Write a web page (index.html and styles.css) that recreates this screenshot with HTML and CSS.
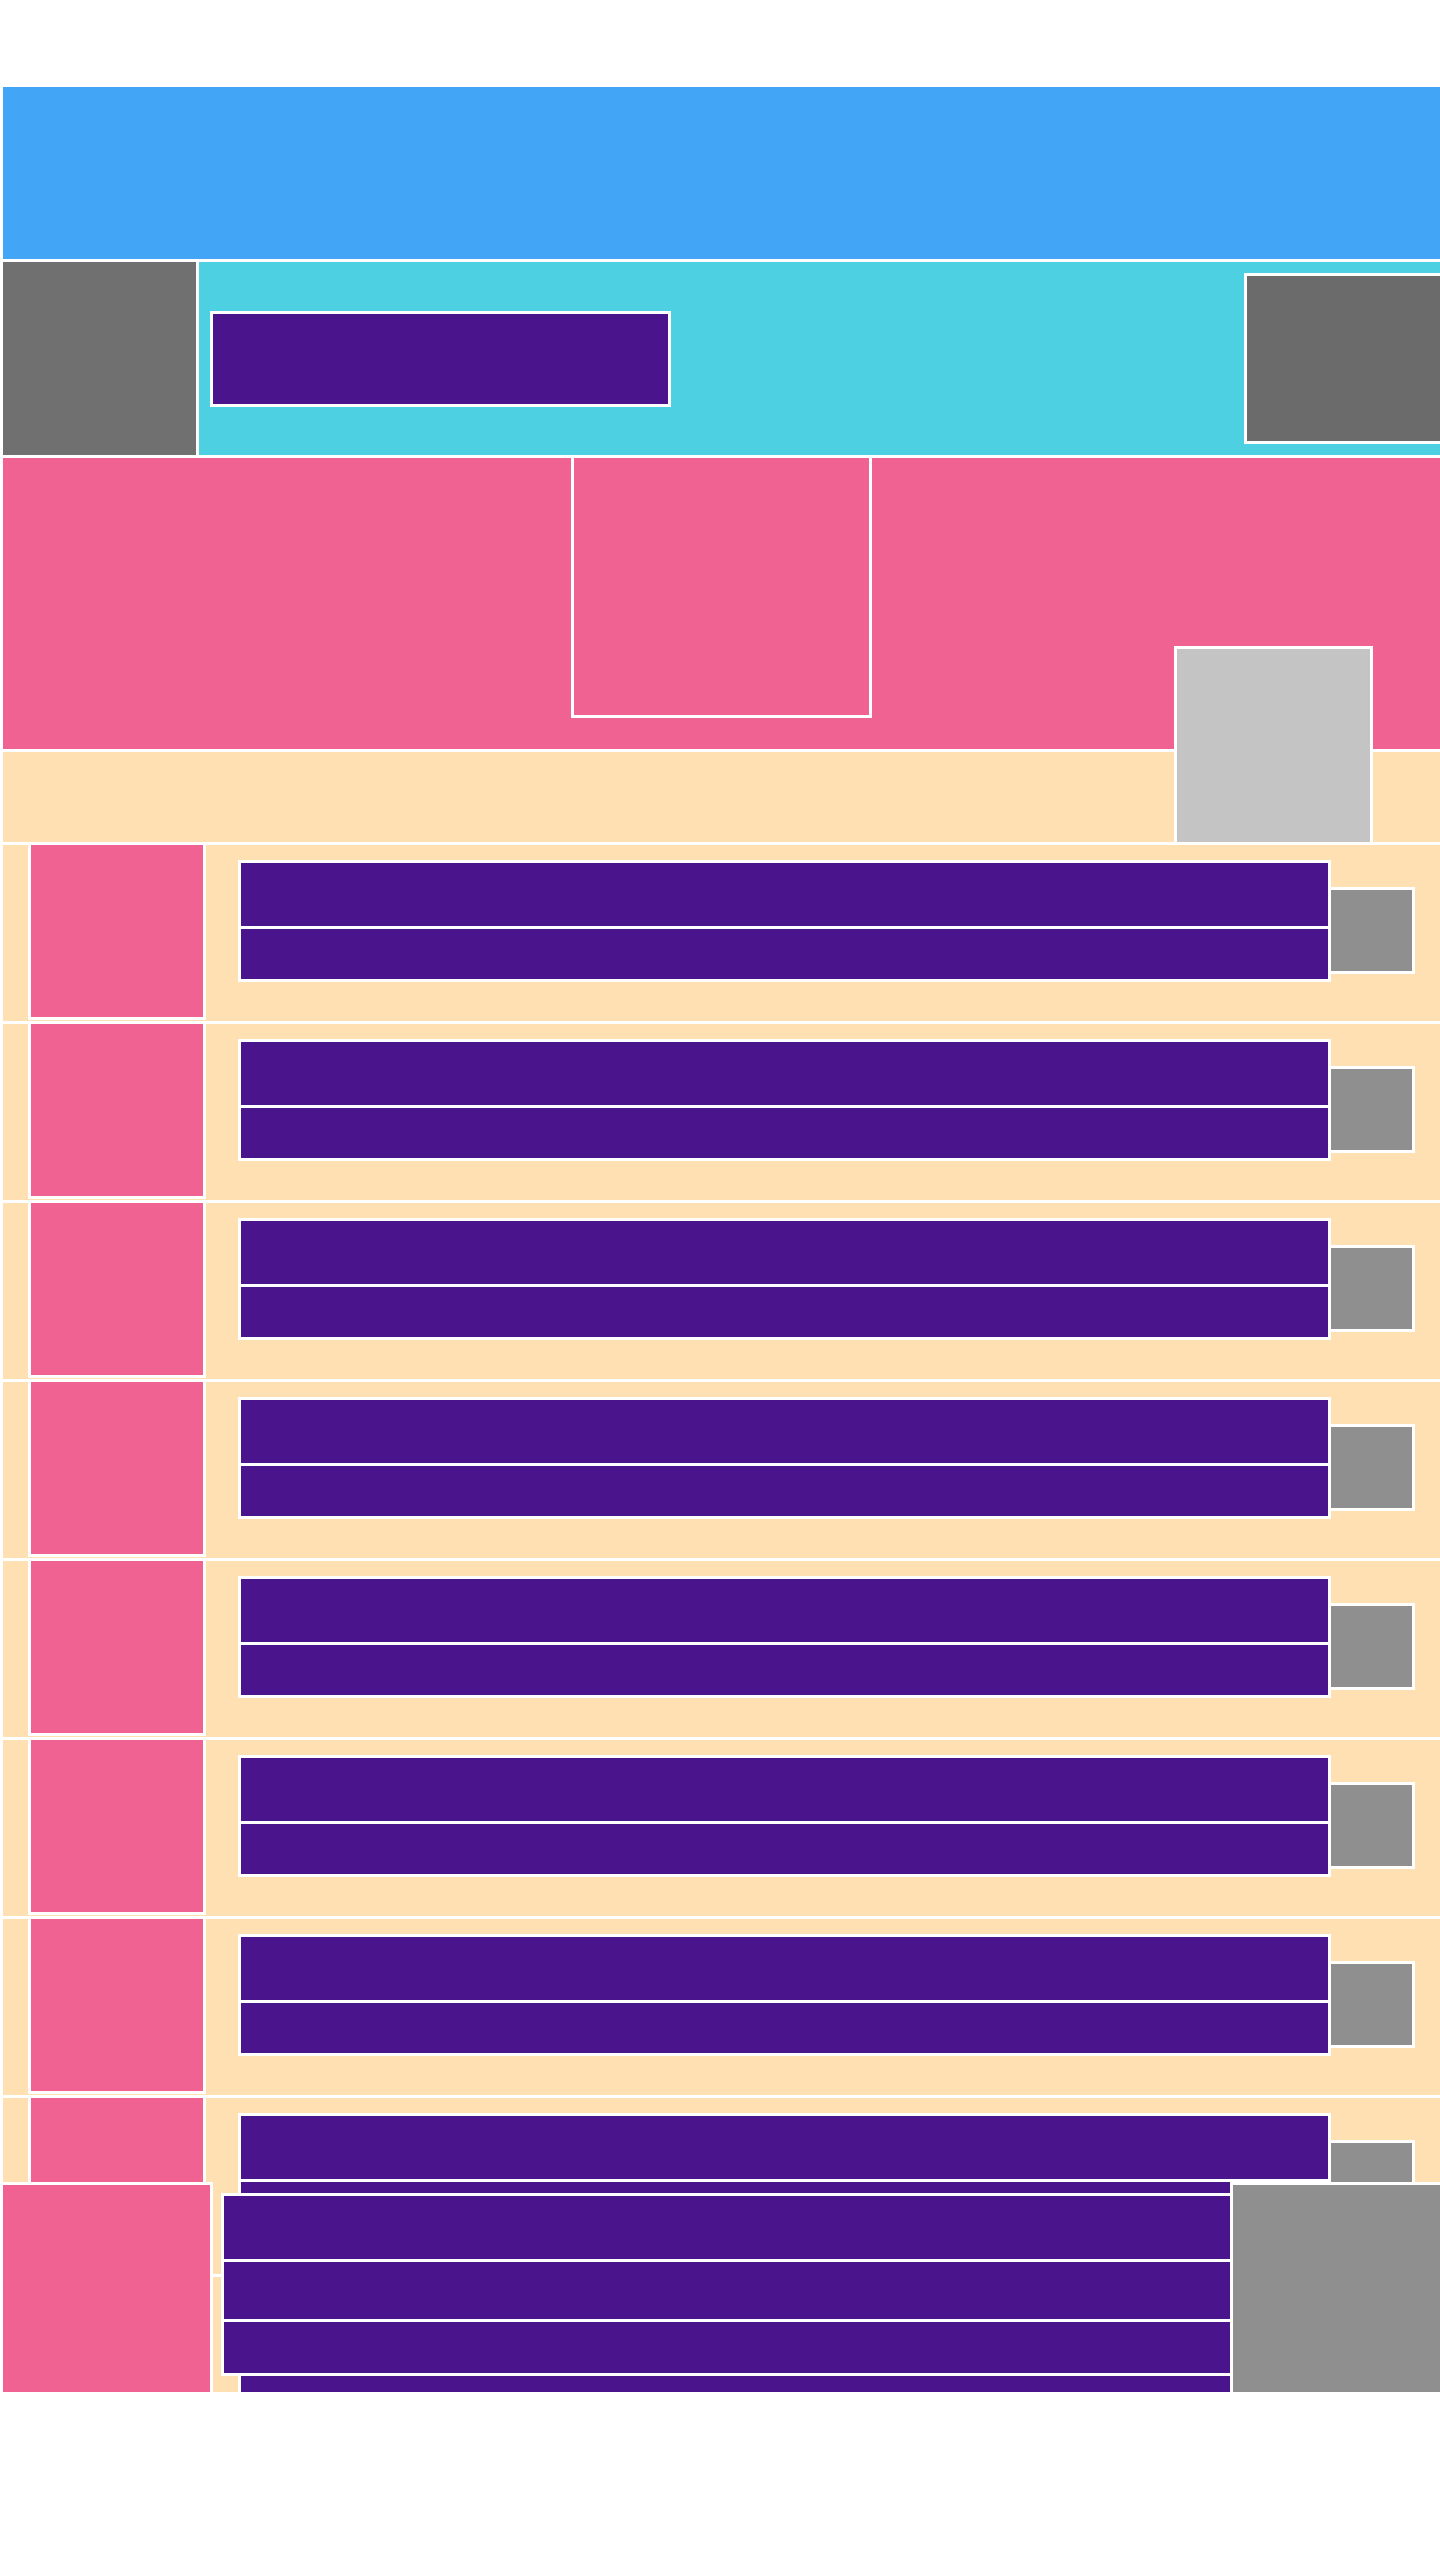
FILE: index.html
```html
<!DOCTYPE html>
<html lang="en">
<head>
<meta charset="utf-8">
<title>Layout</title>
<link rel="stylesheet" href="styles.css">
</head>
<body>
<div class="page">
  <div class="stack">
    <header class="topbar"></header>
    <div class="navrow">
      <div class="nav-logo"></div>
      <div class="nav-main">
        <div class="nav-search"></div>
        <div class="nav-side"></div>
      </div>
    </div>
    <section class="hero">
      <div class="hero-frame"></div>
      <div class="hero-avatar"></div>
    </section>
    <div class="band"></div>
    <ul class="list">
      <li class="item"><div class="thumb"></div><div class="text"><div class="line l1"></div><div class="line l2"></div></div><div class="action"></div></li>
      <li class="item"><div class="thumb"></div><div class="text"><div class="line l1"></div><div class="line l2"></div></div><div class="action"></div></li>
      <li class="item"><div class="thumb"></div><div class="text"><div class="line l1"></div><div class="line l2"></div></div><div class="action"></div></li>
      <li class="item"><div class="thumb"></div><div class="text"><div class="line l1"></div><div class="line l2"></div></div><div class="action"></div></li>
      <li class="item"><div class="thumb"></div><div class="text"><div class="line l1"></div><div class="line l2"></div></div><div class="action"></div></li>
      <li class="item"><div class="thumb"></div><div class="text"><div class="line l1"></div><div class="line l2"></div></div><div class="action"></div></li>
      <li class="item"><div class="thumb"></div><div class="text"><div class="line l1"></div><div class="line l2"></div></div><div class="action"></div></li>
      <li class="item"><div class="thumb"></div><div class="text"><div class="line l1"></div><div class="line l2"></div></div><div class="action"></div></li>
      <li class="item"><div class="thumb"></div><div class="text"><div class="line l1"></div><div class="line l2"></div></div><div class="action"></div></li>
    </ul>
  </div>
  <div class="player">
    <div class="p-art"></div>
    <div class="p-info"><div class="line pl1"></div><div class="line pl2"></div><div class="line pl3"></div></div>
    <div class="p-side"></div>
  </div>
</div>
</body>
</html>
```

FILE: styles.css
```css
* { box-sizing: border-box; margin: 0; padding: 0; }
html, body { background: #ffffff; }
body { margin: 0; overflow: hidden; font-family: "Liberation Sans", Arial, sans-serif; }

.page { position: relative; width: 1440px; height: 2392px; overflow: hidden; }

.stack { display: flex; flex-direction: column; gap: 3px; width: 1443px; padding: 87px 0 0 3px; }

.topbar { height: 172px; background: #42A5F5; }

.navrow { height: 193px; display: flex; gap: 3px; }
.nav-logo { width: 193px; flex-shrink: 0; background: #707070; }
.nav-main { flex: 1; display: flex; align-items: center; padding-left: 11px; background: #4DD0E1; }
.nav-search { width: 461px; height: 96px; border: 3px solid #fff; background: #4A148C; }
.nav-side { margin-left: auto; width: 199px; height: 171px; border: 3px solid #fff; background: #6B6B6B; }

.hero { position: relative; height: 291px; display: flex; align-items: flex-start; background: #F06292; }
.hero-frame { width: 301px; height: 263px; margin: -3px 0 0 568px; border: 3px solid #fff; }
.hero-avatar { position: absolute; left: 1171px; top: 188px; z-index: 1; width: 199px; height: 199px; border: 3px solid #fff; background: #C4C4C4; }

.band { height: 90px; background: #FFE0B2; }

.list { list-style: none; display: flex; flex-direction: column; gap: 3px; }
.item { height: 176px; flex-shrink: 0; display: flex; align-items: flex-start; padding-left: 25px; background: #FFE0B2; }
.thumb { width: 178px; height: 178px; flex-shrink: 0; margin-top: -3px; border: 3px solid #fff; background: #F06292; }
.text { width: 1093px; flex-shrink: 0; margin: 15px 0 0 32px; display: flex; flex-direction: column; gap: 3px; border: 3px solid #fff; background: #fff; }
.line { background: #4A148C; }
.l1 { height: 63px; }
.l2 { height: 50px; }
.action { width: 87px; height: 87px; flex-shrink: 0; margin: 42px 0 0 -3px; border: 3px solid #fff; background: #8F8F8F; }

.player { position: absolute; left: 0; top: 2182px; z-index: 2; width: 1443px; height: 213px; display: flex; align-items: flex-start; }
.p-art { width: 213px; height: 213px; flex-shrink: 0; border: 3px solid #fff; background: #F06292; }
.p-info { width: 1012px; flex-shrink: 0; margin: 11px 0 0 8px; display: flex; flex-direction: column; gap: 3px; border: 3px solid #fff; background: #fff; }
.pl1 { height: 63px; }
.pl2 { height: 57px; }
.pl3 { height: 51px; }
.p-side { width: 213px; height: 213px; flex-shrink: 0; margin-left: -3px; border: 3px solid #fff; background: #8F8F8F; }
```
